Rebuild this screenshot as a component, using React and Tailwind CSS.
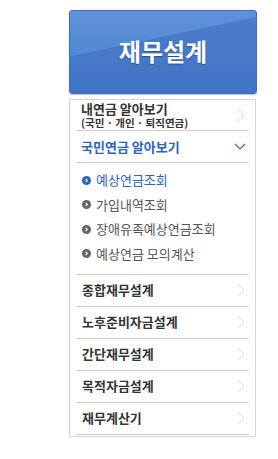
import React from "react";

const font = { fontFamily: '"Noto Sans CJK KR", "Noto Sans", sans-serif' };

function Chevron({ className = "" }) {
  return (
    <svg viewBox="0 0 8 14" className={"h-[14px] w-[8px] " + className} fill="none" stroke="currentColor" strokeWidth="1">
      <path d="M1 1l6 6-6 6" />
    </svg>
  );
}

function Bullet({ active }) {
  return (
    <span
      className={
        "flex h-[9px] w-[9px] items-center justify-center rounded-full " +
        (active ? "bg-[#2f63b3]" : "bg-[#666]")
      }
    >
      <svg viewBox="0 0 6 6" className="h-[5px] w-[5px]" fill="none" stroke="white" strokeWidth="1.3">
        <path d="M2 1l2 2-2 2" />
      </svg>
    </span>
  );
}

const subItems = ["예상연금조회", "가입내역조회", "장애유족예상연금조회", "예상연금 모의계산"];
const menuItems = ["종합재무설계", "노후준비자금설계", "간단재무설계", "목적자금설계", "재무계산기"];

export default function App() {
  return (
    <div className="h-[459px] w-[278px] bg-white pt-[10px]" style={font}>
      <div className="ml-[69px] w-[188px]">
        <div className="relative flex h-[84px] items-center justify-center overflow-hidden rounded-[3px] border border-[#3d6db8] bg-gradient-to-b from-[#5e93da] to-[#4a7fcc] shadow-[0_1px_1px_rgba(0,0,0,0.25)]">
          <div className="absolute left-[-30px] top-[52px] h-[90px] w-[260px] origin-top-left rotate-[-12deg] bg-[#3a6cbf]/55" />
          <span className="relative pb-[2px] text-[24px] font-bold text-white [text-shadow:0_1px_1px_rgba(0,0,0,0.35)]">재무설계</span>
        </div>

        <div className="mt-[5px] w-[187px] border border-[#d6d6d6] px-[6px] pb-[1px]">
          <div className="flex h-[31px] items-center justify-between border-b border-[#cfcfcf] pl-[5px] pr-[4px]">
            <div className="flex flex-col">
              <span className="text-[13px] font-semibold leading-[15px] text-[#333]">내연금 알아보기</span>
              <span className="text-[10.5px] font-semibold leading-[13px] text-[#333]">(국민 · 개인 · 퇴직연금)</span>
            </div>
            <Chevron className="text-[#d8d8d8]" />
          </div>

          <div className="flex h-[32px] items-center justify-between border-b border-[#cfcfcf] pl-[5px] pr-[3px]">
            <span className="text-[13px] font-semibold text-[#2f63b3]">국민연금 알아보기</span>
            <svg viewBox="0 0 12 7" className="h-[7px] w-[12px] text-[#2f63b3]" fill="none" stroke="currentColor" strokeWidth="1.2">
              <path d="M1 1l5 5 5-5" />
            </svg>
          </div>

          <ul className="flex flex-col gap-[6.5px] border-b border-[#cfcfcf] pb-[11px] pl-[6px] pt-[8px]">
            {subItems.map((t, i) => (
              <li key={t} className="flex h-[18px] items-center gap-[5px]">
                <Bullet active={i === 0} />
                <span className={"text-[13px] " + (i === 0 ? "text-[#2f63b3]" : "text-[#555]")}>{t}</span>
              </li>
            ))}
          </ul>

          {menuItems.map((t) => (
            <div key={t} className="flex h-[32px] items-center justify-between border-b border-[#cfcfcf] pl-[6px] pr-[4px]">
              <span className="text-[13px] font-semibold text-[#333]">{t}</span>
              <Chevron className="text-[#d8d8d8]" />
            </div>
          ))}
        </div>
      </div>
    </div>
  );
}
